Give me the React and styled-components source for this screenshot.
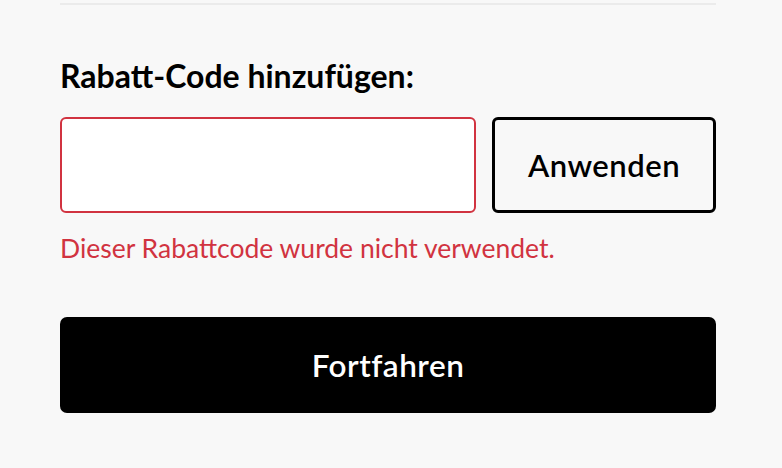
import React, { useState } from "react";
import styled, { createGlobalStyle } from "styled-components";

const GlobalStyle = createGlobalStyle`
  html, body {
    margin: 0;
    padding: 0;
    background: #f8f8f8;
  }
  body {
    font-family: "Lato", "Liberation Sans", sans-serif;
    color: #000;
  }
`;

const Wrapper = styled.div`
  width: 782px;
  height: 468px;
  padding: 3px 66px 0 60px;
  box-sizing: border-box;
  display: flex;
  flex-direction: column;
`;

const Divider = styled.hr`
  margin: 0;
  border: none;
  height: 2px;
  background: #ebebeb;
`;

const Title = styled.h2`
  margin: 51px 0 0;
  font-size: 32px;
  line-height: 40px;
  font-weight: 700;
`;

const Row = styled.div`
  display: flex;
  gap: 16px;
  margin-top: 21px;
`;

const CodeInput = styled.input`
  flex: 1;
  height: 96px;
  box-sizing: border-box;
  border: 2px solid ${(p) => (p.$error ? "#d13340" : "#ccc")};
  border-radius: 6px;
  background: #fff;
  padding: 0 20px;
  font: inherit;
  font-size: 26px;
  outline: none;
`;

const OutlineButton = styled.button`
  width: 224px;
  height: 96px;
  box-sizing: border-box;
  border: 3px solid #000;
  border-radius: 6px;
  background: #f8f8f8;
  color: #000;
  font-family: inherit;
  font-size: 31px;
  font-weight: 600;
  letter-spacing: 0.5px;
  cursor: pointer;
`;

const ErrorText = styled.p`
  margin: 19px 0 0;
  color: #d13340;
  font-size: 26.5px;
  line-height: 32px;
`;

const PrimaryButton = styled.button`
  margin-top: 53px;
  height: 96px;
  border: none;
  border-radius: 7px;
  background: #000;
  color: #fff;
  font-family: inherit;
  font-size: 31.5px;
  font-weight: 600;
  letter-spacing: 0.5px;
  cursor: pointer;
`;

export default function App() {
  const [code, setCode] = useState("");

  return (
    <>
      <GlobalStyle />
      <Wrapper>
        <Divider />
        <Title>Rabatt-Code hinzufügen:</Title>
        <Row>
          <CodeInput
            $error
            value={code}
            onChange={(e) => setCode(e.target.value)}
          />
          <OutlineButton>Anwenden</OutlineButton>
        </Row>
        <ErrorText>Dieser Rabattcode wurde nicht verwendet.</ErrorText>
        <PrimaryButton>Fortfahren</PrimaryButton>
      </Wrapper>
    </>
  );
}
